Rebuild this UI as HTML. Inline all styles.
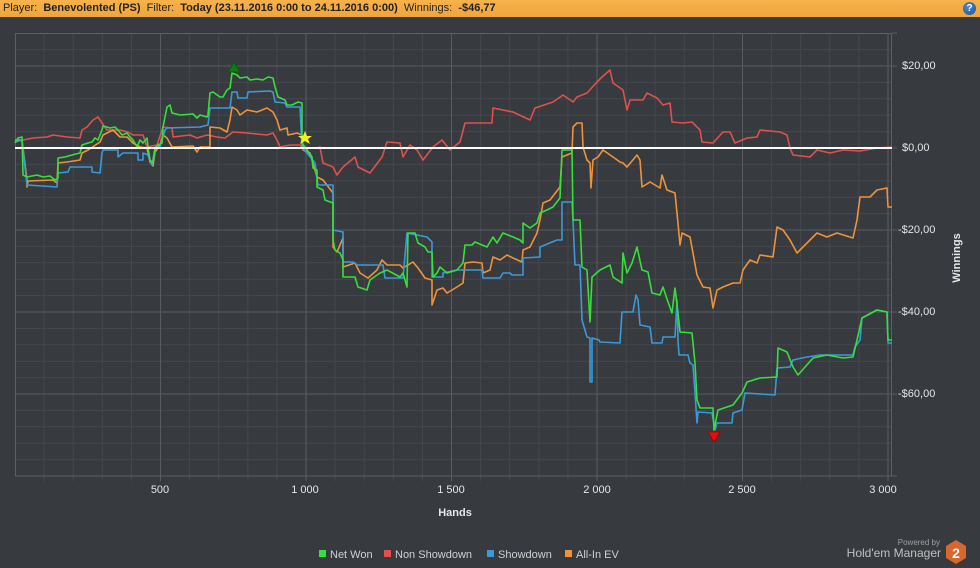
<!DOCTYPE html>
<html><head><meta charset="utf-8"><style>
html,body{margin:0;padding:0;background:#373a3e;width:980px;height:568px;overflow:hidden;font-family:"Liberation Sans",sans-serif}
.hdr{position:absolute;left:0;top:0;width:980px;height:17px;background:linear-gradient(#f6b24c,#f0a53d);font-size:11px;line-height:17px;color:#222;padding-left:3px;box-sizing:border-box;white-space:nowrap}
.hdr b{font-weight:bold}
.q{position:absolute;right:4px;top:2px;width:13px;height:13px;border-radius:50%;background:radial-gradient(circle at 40% 35%,#4a8fd0,#1a4f8f);color:#fff;font-size:10px;font-weight:bold;line-height:13px;text-align:center}
</style></head><body>
<div class="hdr">Player:&nbsp; <b>Benevolented (PS)</b>&nbsp; Filter:&nbsp; <b>Today (23.11.2016 0:00 to 24.11.2016 0:00)</b>&nbsp; Winnings:&nbsp; <b>-$46,77</b><div class="q">?</div></div>
<svg width="980" height="568" style="position:absolute;left:0;top:0" xmlns="http://www.w3.org/2000/svg" font-family="Liberation Sans, sans-serif">
<g stroke="#45484c" stroke-width="1">
<path d="M15 49.6H892M15 82.4H892M15 98.8H892M15 115.2H892M15 131.6H892M15 164.4H892M15 180.8H892M15 197.2H892M15 213.6H892M15 246.4H892M15 262.8H892M15 279.2H892M15 295.6H892M15 328.4H892M15 344.8H892M15 361.2H892M15 377.6H892M15 410.4H892M15 426.8H892M15 443.2H892M15 459.6H892"/>
<path d="M44.1 33V481M73.2 33V481M102.3 33V481M131.4 33V481M189.6 33V481M218.7 33V481M247.8 33V481M276.9 33V481M335.1 33V481M364.2 33V481M393.3 33V481M422.4 33V481M480.6 33V481M509.7 33V481M538.8 33V481M567.9 33V481M626.1 33V481M655.2 33V481M684.3 33V481M713.4 33V481M771.6 33V481M800.7 33V481M829.8 33V481M858.9 33V481"/>
</g>
<g stroke="#595c60" stroke-width="1">
<path d="M15 66H897M15 230H897M15 312H897M15 394H897M15 148H897M892 476H897M892 33H897"/>
<path d="M160.5 33V481M306 33V481M451.5 33V481M597 33V481M742.5 33V481M888 33V481"/>
<rect x="15.5" y="33.5" width="876" height="442.5" fill="none" stroke="#5c5f63"/>
</g>
<g fill="none" stroke-width="1.6" stroke-linejoin="round">
<polyline stroke="#e0504f" points="15,142 23,140 33,138 47,137 53,135 67,137 80,138 82,130 87,127 93,120 98,117 102,123 107,130 120,130 128,132 133,135 143,135 147,147 157,145 163,127 172,128 173,137 190,135 197,138 207,135 217,137 225,138 233,132 247,133 267,135 273,133 278,142 280,147 290,145 300,145 303,148 317,148 320,147 323,163 333,167 337,175 343,167 355,157 358,167 370,173 382,157 387,142 400,143 403,157 410,145 417,150 423,160 433,147 442,140 450,150 460,142 465,123 477,123 492,123 493,108 513,112 530,120 535,108 553,102 563,95 573,102 577,97 587,93 597,82 602,77 610,70 613,83 623,90 627,110 630,100 643,100 647,93 657,98 663,105 670,103 672,122 683,123 692,122 700,130 702,142 713,143 723,132 730,132 735,143 747,138 757,137 760,130 780,132 787,135 790,148 793,155 810,157 817,150 830,153 843,150 860,151 877,148 892,147"/>
<polyline stroke="#f0923a" points="15,140 22,140 27,180 27,187 28,181 53,180 57,183 58,163 67,162 80,160 82,153 88,150 100,142 103,135 113,130 120,137 127,137 133,143 140,147 147,148 150,162 153,166 155,152 160,145 163,135 167,138 172,147 193,146 197,152 200,147 210,147 210,127 220,128 227,132 230,120 232,107 237,110 240,115 247,110 257,112 267,108 273,112 277,120 280,130 287,128 288,135 297,133 302,135 303,150 310,153 317,177 323,180 333,193 333,247 337,252 343,238 343,267 355,263 360,273 368,278 377,270 382,260 387,265 400,265 403,268 413,262 418,268 425,278 432,280 432,305 437,290 443,288 447,293 457,287 463,283 465,263 473,262 482,263 483,273 490,270 493,257 500,260 507,255 513,258 522,262 523,250 530,247 537,233 540,220 543,203 550,200 560,187 562,157 572,153 573,127 577,123 582,123 583,147 587,160 590,163 591,188 593,160 598,157 603,150 613,157 620,162 623,163 627,167 637,155 640,160 642,187 650,182 660,188 662,175 667,190 675,193 678,223 680,245 682,233 690,237 693,253 697,275 703,287 710,288 713,308 717,290 723,287 733,283 740,283 743,270 750,260 757,263 760,255 773,257 777,227 783,230 790,240 797,253 807,243 817,233 827,237 837,233 853,238 857,220 860,197 870,197 877,190 887,188 888,207 892,207"/>
<polyline stroke="#3a9ad9" points="15,142 22,140 27,185 57,187 58,173 68,172 70,167 92,167 92,172 100,173 102,153 103,150 118,150 118,157 123,153 138,153 138,160 143,160 143,153 148,155 152,165 155,148 160,147 165,130 167,128 200,127 208,125 210,108 230,108 232,92 237,92 238,98 247,98 248,92 270,91 273,92 275,102 285,103 287,107 300,107 302,148 307,153 315,163 318,185 333,185 333,230 343,232 343,262 353,262 357,265 383,265 385,278 403,278 407,233 427,237 432,242 432,277 443,277 443,273 457,270 482,270 483,278 500,278 503,273 510,273 512,275 523,275 523,258 540,257 540,247 557,240 562,240 562,202 572,202 573,220 575,265 580,265 582,320 587,337 590,338 590,382 592,382 592,338 599,340 600,342 620,343 622,312 633,312 636,295 638,300 640,325 650,327 652,343 662,343 663,337 675,337 677,300 678,340 679,355 688,355 690,363 693,365 695,393 697,423 698,412 712,413 715,430 717,423 732,423 733,413 742,410 745,393 775,395 777,368 790,367 793,360 807,357 820,355 853,355 855,347 860,340 862,318 877,310 887,312 888,343 892,343"/>
<polyline stroke="#35e03a" points="15,143 18,138 22,137 23,175 27,177 37,175 43,177 50,176 55,180 58,178 58,158 65,157 72,155 80,153 82,145 88,143 92,142 95,138 98,140 102,130 103,126 110,128 115,127 118,130 122,135 127,133 130,137 133,140 137,147 140,140 143,143 147,138 148,147 150,160 153,163 155,148 158,145 162,143 163,127 167,107 170,105 172,113 180,115 193,114 197,118 200,115 207,117 208,115 210,93 213,92 220,97 223,97 227,90 230,88 232,73 237,75 240,78 247,77 250,80 257,79 263,80 268,77 273,78 275,87 278,97 285,100 287,105 292,105 298,102 302,103 302,143 307,150 312,157 313,168 317,170 317,187 323,190 325,200 333,203 333,240 335,250 340,253 343,260 343,277 355,277 358,287 367,290 370,280 380,273 387,270 400,277 403,273 407,287 408,233 415,233 418,243 425,247 428,252 432,252 433,277 437,273 440,267 447,273 457,270 463,263 465,245 472,245 475,242 482,245 487,247 493,237 497,243 503,233 513,237 520,240 523,243 523,223 530,228 537,223 540,213 547,210 553,207 560,198 562,150 572,150 573,220 580,220 582,267 587,270 590,322 592,277 600,270 610,265 613,277 622,283 623,253 627,273 632,263 637,247 642,270 648,272 652,293 660,295 663,287 668,302 672,313 675,288 678,313 680,332 692,333 695,363 697,400 700,408 713,408 714,430 718,410 733,405 742,393 747,382 760,378 777,377 778,348 787,352 793,367 798,375 813,358 827,355 843,358 853,357 857,340 862,318 877,310 887,312 888,340 892,340"/>
</g>
<line x1="15" y1="148" x2="892" y2="148" stroke="#ffffff" stroke-width="2"/>
<polygon points="234,62 228,72 240,72" fill="#0d7a14" stroke="#0a5c10"/>
<polygon points="305,131 307,136 312,136 308,139 310,144 305,141 300,144 302,139 298,136 303,136" fill="#f5f01f"/>
<polygon points="708,432 720,432 714,442" fill="#e01010" stroke="#a00"/>
<g fill="#e6e6e6" font-size="11">
<text x="160" y="493" text-anchor="middle">500</text>
<text x="305" y="493" text-anchor="middle">1 000</text>
<text x="451" y="493" text-anchor="middle">1 500</text>
<text x="597" y="493" text-anchor="middle">2 000</text>
<text x="742" y="493" text-anchor="middle">2 500</text>
<text x="883" y="493" text-anchor="middle">3 000</text>
<text x="455" y="516" text-anchor="middle" font-weight="bold">Hands</text>
<text x="902" y="69">$20,00</text>
<text x="902" y="151">$0,00</text>
<text x="898" y="233">-$20,00</text>
<text x="898" y="315">-$40,00</text>
<text x="898" y="397">-$60,00</text>
<text transform="translate(960,258) rotate(-90)" text-anchor="middle" font-weight="bold">Winnings</text>
</g>
<g font-size="11" fill="#d0d0d0">
<rect x="319" y="550" width="7" height="7" fill="#35e03a"/><text x="330" y="558">Net Won</text>
<rect x="384" y="550" width="7" height="7" fill="#e0504f"/><text x="395" y="558">Non Showdown</text>
<rect x="487" y="550" width="7" height="7" fill="#3a9ad9"/><text x="498" y="558">Showdown</text>
<rect x="565" y="550" width="7" height="7" fill="#f0923a"/><text x="576" y="558">All-In EV</text>
</g>
<text x="940" y="545" font-size="8" fill="#a0a0a0" text-anchor="end">Powered by</text>
<text x="941" y="557" font-size="12" fill="#c0c0c0" text-anchor="end">Hold'em Manager</text>
<polygon points="956,540 966,546 966,558 956,564 946,558 946,546" fill="#d8672b"/>
<text x="956" y="558" font-size="14" font-weight="bold" fill="#fff" text-anchor="middle">2</text>
</svg>
</body></html>
